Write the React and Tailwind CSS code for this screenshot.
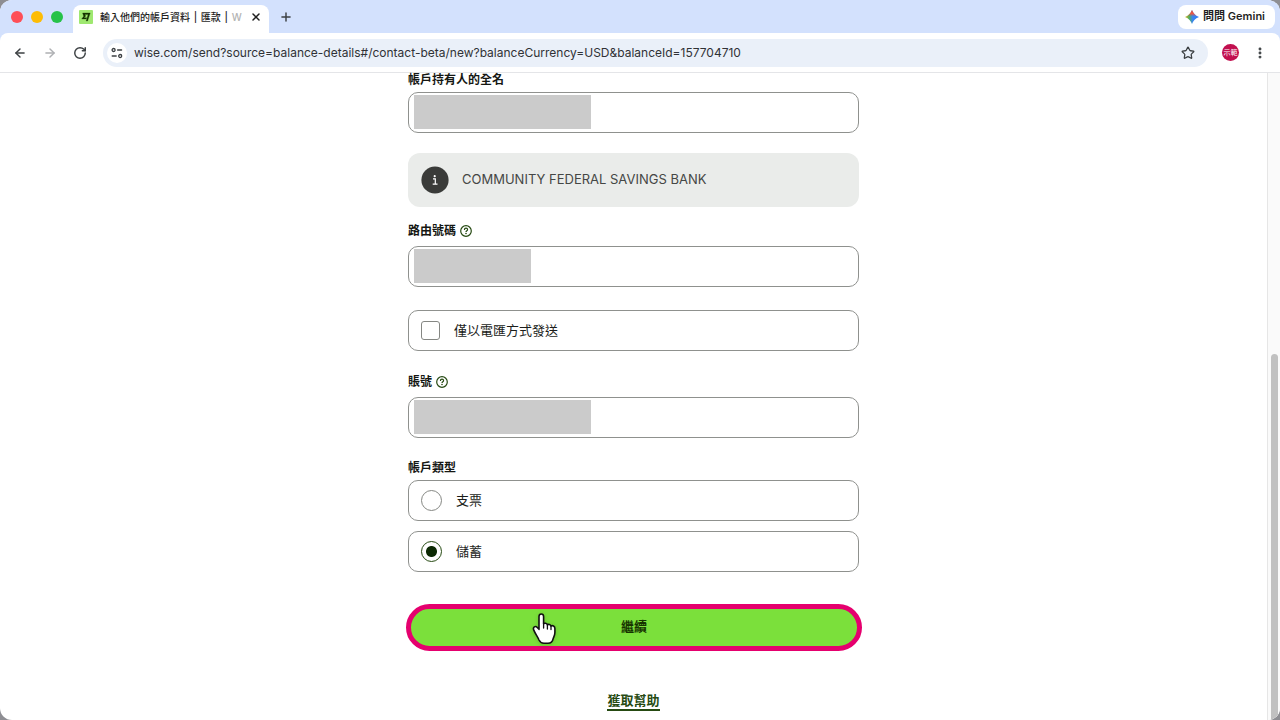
import { useState } from 'react';
import { ArrowLeft, ArrowRight, Plus, RotateCw, Star, X, EllipsisVertical } from 'lucide-react';

const WiseMark = () => (
  <svg viewBox="0 0 14 14" className="w-3.5 h-3.5 shrink-0" aria-hidden="true">
    <rect width="14" height="14" rx="1" fill="#9fe870" />
    <path
      d="M3.6 3h7.6L8.6 11H7.2L9.1 4.6H5.8l.9 1.4L5.1 7.7h2.6l-.5 1.3H2.7l2-2.8z"
      fill="#163300"
      stroke="#163300"
      strokeWidth=".3"
    />
  </svg>
);

const GeminiSpark = () => (
  <svg viewBox="0 0 24 24" className="w-3.5 h-3.5 shrink-0" aria-hidden="true">
    <defs>
      <linearGradient id="spark-left" x1="0" x2="1" y1="0" y2="0">
        <stop offset="0" stopColor="#e3b51c" />
        <stop offset=".3" stopColor="#4fae5c" />
        <stop offset=".55" stopColor="#3a86f0" />
        <stop offset="1" stopColor="#2f7bf5" />
      </linearGradient>
      <linearGradient id="spark-top" x1="0" x2="0" y1="0" y2="1">
        <stop offset="0" stopColor="#ea4335" />
        <stop offset=".25" stopColor="#ea5a45" />
        <stop offset=".45" stopColor="#ea4335" stopOpacity="0" />
      </linearGradient>
    </defs>
    <path d="M12 0c1.600 5 5.500 9.500 12 12-6.500 2.500-10.400 7-12 12-1.600-5-5.500-9.500-12-12C6.500 9.500 10.400 5 12 0z" fill="url(#spark-left)" />
    <path d="M12 0c1.600 5 5.500 9.500 12 12-6.500 2.500-10.400 7-12 12-1.600-5-5.500-9.500-12-12C6.500 9.500 10.400 5 12 0z" fill="url(#spark-top)" />
  </svg>
);

const SiteSettings = () => (
  <svg viewBox="0 0 12 12" className="w-3 h-3" fill="none" stroke="#3c4043" strokeWidth="1.300" strokeLinecap="round" aria-hidden="true">
    <circle cx="2.600" cy="3" r="1.500" />
    <path d="M6.600 3h4" />
    <path d="M1.200 9h4" />
    <circle cx="9.200" cy="9" r="1.500" />
  </svg>
);

const HelpIcon = () => (
  <svg viewBox="0 0 12 12" className="w-3 h-3" fill="none" stroke="#264a12" aria-hidden="true">
    <circle cx="6" cy="6" r="5.300" strokeWidth="1.200" />
    <path d="M4.400 4.900c0-1 .6-1.700 1.600-1.700s1.600.6 1.600 1.500c0 1-1.600 1.100-1.600 2.200" strokeWidth="1.200" />
    <circle cx="6" cy="8.500" r=".8" fill="#264a12" stroke="none" />
  </svg>
);

const InfoIcon = () => (
  <svg viewBox="0 0 28 28" className="w-7 h-7 shrink-0" aria-hidden="true">
    <circle cx="14" cy="14" r="13.600" fill="#3a3b39" />
    <circle cx="13.700" cy="10.200" r="1.100" fill="#fff" />
    <path d="M12 12.900h2.300v5M11.700 18.100h4.800" fill="none" stroke="#fff" strokeWidth="1.200" />
  </svg>
);

const HandCursor = () => (
  <svg viewBox="0 0 26 34" className="absolute left-[120px] top-[3px] w-[26px] h-[34px] pointer-events-none drop-shadow-sm" aria-hidden="true">
    <path
      d="M8 4.600c0-3.500 4.600-3.500 4.600 0v7.200c.9-1 3.300-.7 3.800 1 1-.8 3.100-.4 3.500 1.200 1.700-.8 4 0 4 2.400v4.200c0 3-1.400 4.500-1.900 6.500-.5 2.800-2.300 4.100-5 4.100h-4c-2.700 0-4-1-5-3.200-1.200-3-3.600-6-5.200-9.900-1.300-3 1.600-4.600 3.500-2.600L8 17.300z"
      fill="#fff"
      stroke="#111"
      strokeWidth="1.600"
      strokeLinejoin="round"
    />
    <path d="M12.600 11.500v4.500M16.400 12.800V17M20 14v3.500" stroke="#111" strokeWidth="1.300" strokeLinecap="round" />
  </svg>
);

const BrowserBar = () => (
  <header className="bg-[#d3e1fd] shrink-0">
    <div className="h-[33px] flex items-center pl-[11px] pr-[5px]">
      <div className="flex gap-2 mr-2.5">
        <span className="w-3 h-3 rounded-full bg-[#fe4f57]" />
        <span className="w-3 h-3 rounded-full bg-[#fdbc05]" />
        <span className="w-3 h-3 rounded-full bg-[#26c249]" />
      </div>
      <div className="w-[196px] self-end h-7 pl-1.5 pr-[7px] pb-1 flex items-center bg-white rounded-t-lg">
        <WiseMark />
        <span className="flex-1 ml-[7px] text-[10px] font-medium whitespace-nowrap text-[#1f1f1f]">
          輸入他們的帳戶資料 <span className="mx-px">|</span> 匯款 <span className="mx-px">|</span> <span className="text-[#b4b4b4]">W</span>
        </span>
        <button aria-label="關閉分頁"><X className="w-3 h-3 text-[#1f1f1f]" strokeWidth={3} /></button>
      </div>
      <button aria-label="新分頁" className="ml-2.5"><Plus className="w-3.5 h-3.5 text-[#3c4043]" strokeWidth={2.5} /></button>
      <button className="ml-auto h-6 pl-[7px] pr-2.5 flex items-center gap-1 rounded-lg bg-white text-[11px] font-semibold text-[#1f1f1f]">
        <GeminiSpark />
        問問 Gemini
      </button>
    </div>

    <div className="h-10 flex items-center px-[13px] rounded-t-lg bg-white border-b border-[#e4e5e8]">
      <button aria-label="上一頁"><ArrowLeft className="w-3.5 h-3.5 text-[#3c4043]" strokeWidth={2.5} /></button>
      <button aria-label="下一頁" className="ml-4"><ArrowRight className="w-3.5 h-3.5 text-[#aeb0b3]" strokeWidth={2.5} /></button>
      <button aria-label="重新載入" className="ml-4"><RotateCw className="w-3.5 h-3.5 text-[#3c4043]" strokeWidth={2.5} /></button>
      <div className="flex-1 h-7 ml-4 pl-1 pr-[13px] flex items-center rounded-full bg-[#eaf0f9]">
        <span className="w-5 h-5 flex items-center justify-center rounded-full bg-white"><SiteSettings /></span>
        <input
          aria-label="網址"
          defaultValue="wise.com/send?source=balance-details#/contact-beta/new?balanceCurrency=USD&balanceId=157704710"
          className="flex-1 min-w-0 ml-[7px] bg-transparent outline-none text-[12px] text-[#303236]"
        />
        <button aria-label="加入書籤"><Star className="w-3.5 h-3.5 text-[#3c4043]" strokeWidth={2.2} /></button>
      </div>
      <button className="w-[17px] h-[17px] ml-3.5 rounded-full bg-[#c2104f] text-white text-[7px] leading-none">示範</button>
      <button aria-label="選單" className="ml-3.5"><EllipsisVertical className="w-3.5 h-3.5 text-[#3c4043]" strokeWidth={3} /></button>
    </div>
  </header>
);

const FieldLabel = ({ id, children, help }) => (
  <div className="flex items-center gap-1 leading-[14px] text-[12px]">
    <label htmlFor={id} className="font-bold text-[#151713]">{children}</label>
    {help && <button type="button" aria-label="說明"><HelpIcon /></button>}
  </div>
);

// redacted value sits in front of the editable part
const TextField = ({ id, maskClass }) => (
  <div className="h-[41px] p-0.5 pb-[3px] pl-[5px] flex items-center rounded-[10px] border border-[#8f918e] bg-white">
    <span className={`h-[34px] shrink-0 bg-[#cbcbcb] ${maskClass}`} />
    <input id={id} className="flex-1 min-w-0 h-full px-2 text-[13px] outline-none" />
  </div>
);

const RadioRow = ({ value, label, checked, onChange }) => (
  <label className="h-[41px] px-3 flex items-center gap-3.5 rounded-[10px] border border-[#8f918e] text-[13px] text-[#1b1d1a]">
    <input
      type="radio"
      name="accountType"
      value={value}
      checked={checked}
      onChange={() => onChange(value)}
      className="appearance-none w-[21px] h-[21px] rounded-full border border-[#858783] checked:border-[#264a12] checked:bg-[radial-gradient(circle,#0c2a04_5px,transparent_6px)]"
    />
    {label}
  </label>
);

export default function App() {
  const [accountType, setAccountType] = useState('savings');
  const [wireOnly, setWireOnly] = useState(false);

  return (
    <div className="bg-[#8e8e93]">
      <div className="min-h-screen flex flex-col overflow-hidden rounded-xl bg-white font-[Inter,'Noto_Sans_CJK_TC',sans-serif]">
        <BrowserBar />

        <div className="flex-1 flex">
          <main className="flex-1 px-4">
            <form className="w-full max-w-[451px] mx-auto" onSubmit={(e) => e.preventDefault()}>
              <div className="mb-5 flex flex-col gap-[5px]">
                <FieldLabel id="name">帳戶持有人的全名</FieldLabel>
                <TextField id="name" maskClass="w-[177px]" />
              </div>

              <div className="h-[54px] mb-[17px] px-[13px] flex items-center gap-[13px] rounded-xl bg-[#eaecea] text-[13px] text-[#454745]">
                <InfoIcon />
                <p>COMMUNITY FEDERAL SAVINGS BANK</p>
              </div>

              <div className="mb-[23px] flex flex-col gap-2">
                <FieldLabel id="routing" help>路由號碼</FieldLabel>
                <TextField id="routing" maskClass="w-[117px]" />
              </div>

              <label className="h-[41px] mb-6 px-3 flex items-center gap-3.5 rounded-[10px] border border-[#8f918e] text-[13px] text-[#1b1d1a]">
                <input
                  type="checkbox"
                  checked={wireOnly}
                  onChange={(e) => setWireOnly(e.target.checked)}
                  className="appearance-none w-[19px] h-[19px] rounded-[3px] border border-[#858783] checked:bg-[#163300]"
                />
                僅以電匯方式發送
              </label>

              <div className="mb-[23px] flex flex-col gap-2">
                <FieldLabel id="account" help>賬號</FieldLabel>
                <TextField id="account" maskClass="w-[177px]" />
              </div>

              <fieldset className="mb-8">
                <legend className="mb-[5px] text-[12px] leading-[14px] font-bold text-[#151713]">帳戶類型</legend>
                <div className="flex flex-col gap-2.5">
                  <RadioRow value="checking" label="支票" checked={accountType === 'checking'} onChange={setAccountType} />
                  <RadioRow value="savings" label="儲蓄" checked={accountType === 'savings'} onChange={setAccountType} />
                </div>
              </fieldset>

              <button
                type="submit"
                className="relative block h-[47px] w-[calc(100%+5px)] -mx-0.5 mb-10 pb-0.5 rounded-full border-[5px] border-[#e5006e] bg-[#7be03b] text-[13px] font-bold text-[#163300]"
              >
                繼續
                <HandCursor />
              </button>

              <div className="flex justify-center">
                <a href="#help" className="border-b-2 border-[#264a12] text-[13px] leading-[18px] font-bold text-[#264a12]">獲取幫助</a>
              </div>
            </form>
          </main>

          <div className="w-[13px] flex flex-col items-center border-l border-[#e6e6e6] bg-[#fafafa]">
            <div className="w-[7px] flex-1 mt-[281px] rounded-t-full bg-[#c1c1c1]" />
          </div>
        </div>
      </div>
    </div>
  );
}
